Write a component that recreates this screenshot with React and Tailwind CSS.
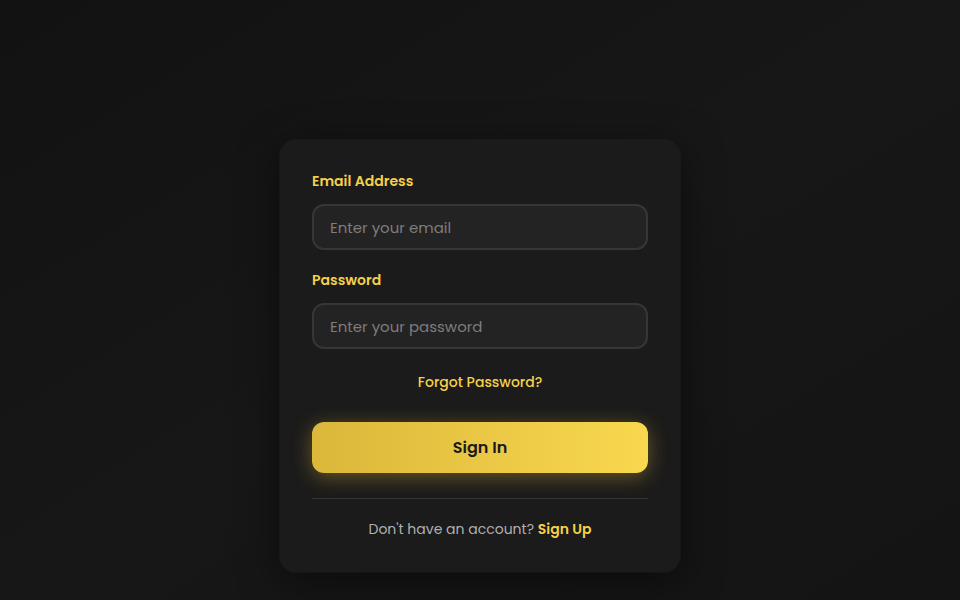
import React from 'react'

const App = () => {
  return (
    <div
      className="min-h-screen w-full flex items-start justify-center bg-gradient-to-br from-[#121212] via-[#171717] to-[#141414] pt-[140px] pb-[28px]"
      style={{ fontFamily: "Poppins, 'Open Sans', 'Noto Sans', sans-serif" }}
    >
      <div className="w-[400px] rounded-2xl bg-[#1b1b1b] shadow-[0_0_0_1px_rgba(255,255,255,0.03),0_10px_40px_rgba(0,0,0,0.5)] px-8 pt-[31px] pb-[33px]">
        {/* Email */}
        <label className="block text-sm font-semibold text-[#f5d04a] mb-[13px]">Email Address</label>
        <input
          type="email"
          placeholder="Enter your email"
          className="w-full h-[46px] rounded-xl bg-[#232323] border-2 border-[#363636] px-4 text-[15px] text-gray-200 placeholder-[#7d7d7d] outline-none"
        />

        {/* Password */}
        <label className="block text-sm font-semibold text-[#f5d04a] mt-[20px] mb-[13px]">Password</label>
        <input
          type="password"
          placeholder="Enter your password"
          className="w-full h-[46px] rounded-xl bg-[#232323] border-2 border-[#363636] px-4 text-[15px] text-gray-200 placeholder-[#7d7d7d] outline-none"
        />

        <div className="text-center mt-[21px]">
          <a href="#" className="text-sm font-medium text-[#f5d04a]">Forgot Password?</a>
        </div>

        <button className="w-full h-[51px] mt-[28px] rounded-xl bg-gradient-to-r from-[#dbb73a] to-[#f9d84f] text-[#1a1a1a] text-base font-semibold shadow-[0_4px_20px_rgba(245,200,60,0.35)]">
          Sign In
        </button>

        <div className="h-px bg-[#333] mt-[25px]" />

        <p className="text-center text-sm text-[#b0b0b0] mt-[20px]">
          Don't have an account?{' '}
          <a href="#" className="font-semibold text-[#f5d04a]">Sign Up</a>
        </p>
      </div>
    </div>
  )
}

export default App
